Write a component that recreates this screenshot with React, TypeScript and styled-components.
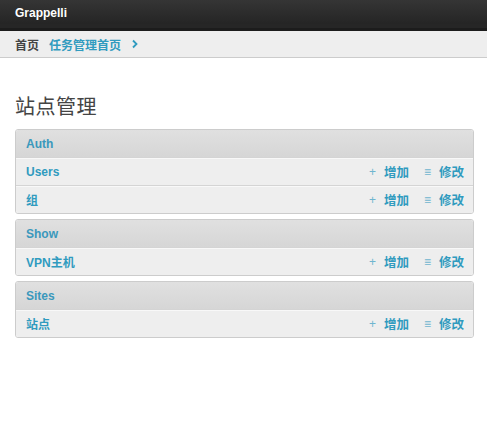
import React from "react";
import styled, { createGlobalStyle } from "styled-components";

const Global = createGlobalStyle`
  html, body { margin: 0; padding: 0; background: #fff; }
  body { font-family: "Liberation Sans", Arial, "Noto Sans CJK SC", sans-serif; font-size: 12px; color: #444; }
  * { box-sizing: border-box; }
`;

const Header = styled.div`
  height: 31px;
  background: linear-gradient(#353535, #222);
  border-bottom: 3px solid #1c1c1c;
  box-shadow: inset 0 -4px 0 #262626;
  display: flex;
  align-items: center;
  padding: 0 15px 2px;
`;

const Brand = styled.span`
  color: #fff;
  font-weight: bold;
  font-size: 12px;
`;

const Breadcrumbs = styled.div`
  height: 27px;
  background: #eee;
  border-bottom: 1px solid #ccc;
  display: flex;
  align-items: center;
  gap: 10px;
  padding: 0 15px;
  font-size: 12px;
  font-weight: bold;
`;

const Crumb = styled.span<{ $link?: boolean }>`
  color: ${(p) => (p.$link ? "#309bbf" : "#444")};
  display: flex;
  align-items: center;
`;

const Content = styled.div`
  padding: 37px 13px 0 15px;
`;

const Title = styled.h1`
  margin: 0 0 12px;
  font-size: 20px;
  font-weight: normal;
  color: #444;
  line-height: 22px;
  letter-spacing: 0.5px;
  font-family: "Noto Sans CJK SC", sans-serif;
`;

const Module = styled.div`
  border: 1px solid #ccc;
  border-radius: 3px;
  margin-bottom: 5px;
  overflow: hidden;
`;

const ModuleHead = styled.div`
  height: 27px;
  background: linear-gradient(#e0e0e0, #d6d6d6);
  display: flex;
  align-items: center;
  padding: 0 10px;
  color: #3a98bc;
  font-weight: bold;
  font-size: 12px;
`;

const Row = styled.div`
  height: 28px;
  background: #eee;
  border-top: 1px solid #d4d4d4;
  box-shadow: inset 0 1px 0 #f8f8f8;
  display: flex;
  align-items: center;
  padding: 0 9px 0 10px;
`;

const RowName = styled.span`
  flex: 1;
  color: #309bbf;
  font-weight: bold;
  font-size: 12px;
`;

const Action = styled.span`
  display: flex;
  align-items: center;
  color: #309bbf;
  font-weight: bold;
  font-size: 12.5px;
  margin-left: 15px;
`;

const Glyph = styled.span`
  color: #6fb5cf;
  font-weight: normal;
  font-size: 12px;
  margin-right: 8px;
`;

type Model = { name: string };
const apps: { name: string; models: Model[] }[] = [
  { name: "Auth", models: [{ name: "Users" }, { name: "组" }] },
  { name: "Show", models: [{ name: "VPN主机" }] },
  { name: "Sites", models: [{ name: "站点" }] },
];

export default function App() {
  return (
    <>
      <Global />
      <Header>
        <Brand>Grappelli</Brand>
      </Header>
      <Breadcrumbs>
        <Crumb>首页</Crumb>
        <Crumb $link>任务管理首页</Crumb>
        <Crumb $link>
          <svg width="8" height="10" viewBox="0 0 8 10">
            <path d="M2 1.5 L5.5 5 L2 8.5" fill="none" stroke="#309bbf" strokeWidth="1.8" />
          </svg>
        </Crumb>
      </Breadcrumbs>
      <Content>
        <Title>站点管理</Title>
        {apps.map((a) => (
          <Module key={a.name}>
            <ModuleHead>{a.name}</ModuleHead>
            {a.models.map((m) => (
              <Row key={m.name}>
                <RowName>{m.name}</RowName>
                <Action>
                  <Glyph>+</Glyph>增加
                </Action>
                <Action>
                  <Glyph>≡</Glyph>修改
                </Action>
              </Row>
            ))}
          </Module>
        ))}
      </Content>
    </>
  );
}
